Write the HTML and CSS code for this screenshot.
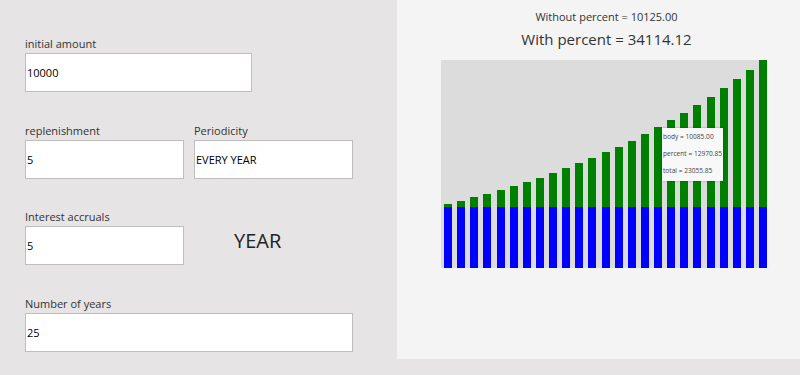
FILE: index.html
```html
<!DOCTYPE html>
<html lang="en">
<head>
    <meta charset="UTF-8">
    <title>Deposit calculator</title>
    <link rel="stylesheet" href="styles.css">
</head>
<body>
    <div id="app">
        <div id="form">
            <div class="field">
                <label>initial amount</label>
                <input class="wide" type="text" value="10000">
            </div>
            <div class="row">
                <div class="field">
                    <label>replenishment</label>
                    <input type="text" value="5">
                </div>
                <div class="field">
                    <label>Periodicity</label>
                    <input type="text" value="EVERY YEAR">
                </div>
            </div>
            <div class="row">
                <div class="field">
                    <label>Interest accruals</label>
                    <input type="text" value="5">
                </div>
                <div class="period">YEAR</div>
            </div>
            <div class="field">
                <label>Number of years</label>
                <input class="full" type="text" value="25">
            </div>
        </div>
        <div id="result">
            <p class="without">Without percent = 10125.00</p>
            <p class="with">With percent = 34114.12</p>
            <div id="chart">
                <div class="tooltip">
                    <p>body = 10085.00</p>
                    <p>percent = 12970.85</p>
                    <p>total = 23055.85</p>
                </div>
            </div>
        </div>
    </div>
    <script defer type="text/javascript">
        const _CHART = document.getElementById("chart")
        const amount = 10000
        const add = 5
        const rate = 0.05
        const years = 25
        let totals = []
        let total = amount
        for (let i = 1; i <= years; i++) {
            total = (total + add) * (1 + rate)
            totals.push(total)
        }
        const max = totals[totals.length - 1]
        totals.forEach((t, i) => {
            const bar = document.createElement("div")
            bar.className = "bar"
            const green = document.createElement("span")
            green.className = "percent"
            green.style.height = ((t - amount) / max * 208) + "px"
            const blue = document.createElement("span")
            blue.className = "body"
            blue.style.height = (amount / max * 208) + "px"
            bar.appendChild(green)
            bar.appendChild(blue)
            _CHART.appendChild(bar)
        })
    </script>
</body>
</html>
```

FILE: styles.css
```css
body {
    margin: 0;
    background-color: rgb(230, 228, 228);
    font-family: "Open Sans", "Noto Sans", sans-serif;
}
#app {
    display: flex;
    flex-flow: row;
}
#form {
    width: 372px;
    padding: 35px 0 0 25px;
    display: flex;
    flex-flow: column;
    gap: 29.7px;
}
.row {
    display: flex;
    flex-flow: row;
    gap: 10px;
}
.field {
    display: flex;
    flex-flow: column;
}
.field > label {
    font-size: 11px;
    line-height: 18px;
    color: rgb(51, 51, 51);
}
.field > input {
    box-sizing: border-box;
    width: 159px;
    height: 39px;
    margin: 0;
    padding: 0 1px;
    border: 1px solid rgb(190, 190, 190);
    background-color: white;
    font-family: "Open Sans", "Noto Sans", sans-serif;
    font-size: 11px;
    color: black;
    outline: none;
}
.field > input.wide { width: 227px; }
.field > input.full { width: 328px; }
.period {
    margin: 18px 0 0 40px;
    height: 39px;
    line-height: 30px;
    font-size: 20px;
    color: rgb(34, 34, 34);
}
#result {
    width: 331px;
    height: 359px;
    padding: 0 28px 0 44px;
    background-color: rgb(244, 244, 244);
    display: flex;
    flex-flow: column;
    align-items: center;
}
#result > p {
    margin: 0;
    color: rgb(51, 51, 51);
}
.without {
    padding-top: 8px;
    font-size: 11px;
    line-height: 18px;
}
.with {
    font-size: 15px;
    line-height: 26px;
}
#chart {
    position: relative;
    align-self: flex-start;
    margin-top: 8px;
    width: 323px;
    height: 208px;
    padding-left: 3px;
    background-color: rgb(220, 220, 220);
    display: flex;
    flex-flow: row;
    justify-content: space-between;
    align-items: flex-end;
}
.bar {
    width: 8px;
    display: flex;
    flex-flow: column;
}
.bar > span { display: block; }
.bar > .percent { background-color: rgb(0, 128, 0); }
.bar > .body { background-color: rgb(0, 0, 255); }
.tooltip {
    position: absolute;
    left: 221px;
    top: 68px;
    width: 61px;
    height: 53px;
    background-color: rgb(248, 248, 248);
    box-shadow: 0 0 2px rgba(0, 0, 0, 0.3);
    z-index: 1;
}
.tooltip > p {
    margin: 0;
    padding-left: 1px;
    font-size: 6.6px;
    line-height: 17px;
    color: rgb(68, 68, 68);
    white-space: nowrap;
}
```
